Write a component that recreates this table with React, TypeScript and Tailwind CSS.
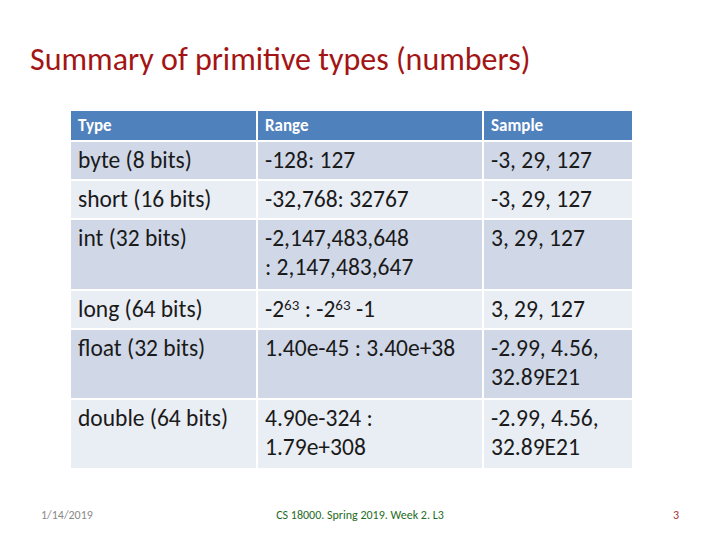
const rows: { type: string; range: React.ReactNode; sample: React.ReactNode; h: string }[] = [
  { type: "byte (8 bits)", range: "-128: 127", sample: "-3, 29, 127", h: "h-[37px]" },
  { type: "short (16 bits)", range: "-32,768: 32767", sample: "-3, 29, 127", h: "h-[37px]" },
  {
    type: "int (32 bits)",
    range: (
      <>
        -2,147,483,648
        <br />: 2,147,483,647
      </>
    ),
    sample: "3, 29, 127",
    h: "h-[69px]",
  },
  {
    type: "long (64 bits)",
    range: (
      <>
        -2<sup className="text-[15px]">63</sup> : -2<sup className="text-[15px]">63</sup> -1
      </>
    ),
    sample: "3, 29, 127",
    h: "h-[37px]",
  },
  {
    type: "float (32 bits)",
    range: "1.40e-45 : 3.40e+38",
    sample: (
      <>
        -2.99, 4.56,
        <br />
        32.89E21
      </>
    ),
    h: "h-[68px]",
  },
  {
    type: "double (64 bits)",
    range: (
      <>
        4.90e-324 :
        <br />
        1.79e+308
      </>
    ),
    sample: (
      <>
        -2.99, 4.56,
        <br />
        32.89E21
      </>
    ),
    h: "h-[68px]",
  },
];

export default function App() {
  return (
    <main
      className="flex flex-col w-[720px] h-[540px] bg-white overflow-hidden"
      style={{ fontFamily: "Carlito, Lato, 'Open Sans', sans-serif" }}
    >
      <h1 className="pl-[30px] pt-[38px] text-[32px] leading-[44px] text-[#a31515]">
        Summary of primitive types (numbers)
      </h1>

      <div className="pl-[69px] pt-[27px]">
        <table className="border-separate border-spacing-[2px] bg-white text-[#1a1a1a] text-[23.5px] leading-[29px]">
          <thead>
            <tr className="h-[29px]">
              <th className="w-[185px] bg-[#4f81bd] text-white text-[17px] font-bold text-left align-middle px-[7px]">Type</th>
              <th className="w-[224px] bg-[#4f81bd] text-white text-[17px] font-bold text-left align-middle px-[7px]">Range</th>
              <th className="w-[148px] bg-[#4f81bd] text-white text-[17px] font-bold text-left align-middle px-[7px]">Sample</th>
            </tr>
          </thead>
          <tbody>
            {rows.map((r, i) => {
              const bg = i % 2 === 0 ? "bg-[#d0d8e8]" : "bg-[#e9edf4]";
              return (
                <tr key={r.type} className={r.h}>
                  <td className={`${bg} align-top px-[7px] pt-[4px] whitespace-nowrap`}>{r.type}</td>
                  <td className={`${bg} align-top px-[7px] pt-[4px] whitespace-nowrap`}>{r.range}</td>
                  <td className={`${bg} align-top px-[7px] pt-[4px] whitespace-nowrap`}>{r.sample}</td>
                </tr>
              );
            })}
          </tbody>
        </table>
      </div>

      <div className="flex-1" />

      <footer className="grid grid-cols-3 items-center px-[41px] pb-[17px] leading-[16px]">
        <span className="text-left text-[12px] text-[#8a8a8a]">1/14/2019</span>
        <span className="text-center text-[12px] text-[#1e6b1e] whitespace-nowrap">CS 18000. Spring 2019. Week 2. L3</span>
        <span className="text-right text-[12px] text-[#a33]">3</span>
      </footer>
    </main>
  );
}
